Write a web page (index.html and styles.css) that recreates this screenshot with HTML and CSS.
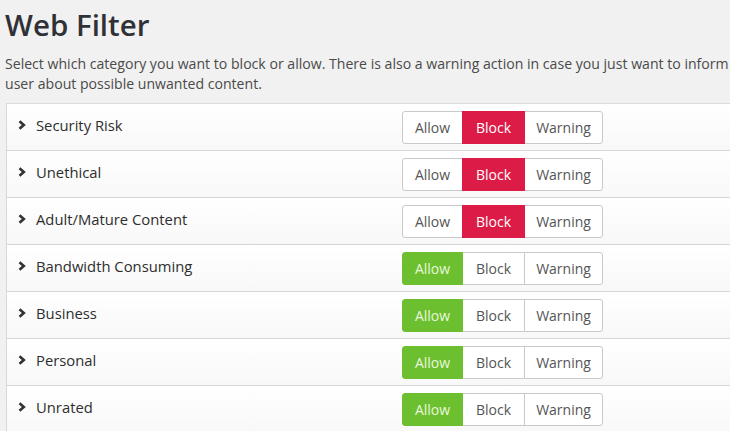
FILE: index.html
```html
<!DOCTYPE html>
<html lang="en">
<head>
  <meta charset="UTF-8" />
  <title>Web Filter</title>
  <link rel="stylesheet" href="styles.css">
</head>
<body>
  <div class="page">
    <h1>Web Filter</h1>
    <p class="intro">Select which category you want to block or allow. There is also a warning action in case you just want to inform user about possible unwanted content.</p>
    <div class="categorias" id="categorias"></div>
  </div>
  <script>
    const categorias = [
      ['Security Risk', 'block'],
      ['Unethical', 'block'],
      ['Adult/Mature Content', 'block'],
      ['Bandwidth Consuming', 'allow'],
      ['Business', 'allow'],
      ['Personal', 'allow'],
      ['Unrated', 'allow']
    ];

    const chevron = '<svg class="chevron" width="8" height="10" viewBox="0 0 8 10"><path d="M1.5 1.3 L5.8 5 L1.5 8.7" fill="none" stroke="#333" stroke-width="2.6"/></svg>';

    document.getElementById('categorias').innerHTML = categorias.map(([nome, acao]) => `
      <div class="linha">
        <div class="nome">${chevron}<span>${nome}</span></div>
        <div class="acoes">
          <button class="btn allow ${acao === 'allow' ? 'ativo' : ''}">Allow</button>
          <button class="btn block ${acao === 'block' ? 'ativo' : ''}">Block</button>
          <button class="btn warning">Warning</button>
        </div>
      </div>
    `).join('');
  </script>
</body>
</html>
```

FILE: styles.css
```css
:root {
  --vermelho: #dc1c47;
  --verde: #6cbf2f;
  --borda: #c9c9c9;
  --texto: #2e2e2e;
}
html, body {
  overflow: hidden;
}
body {
  margin: 0;
  background: #f1f1f1;
  font-family: 'Open Sans', sans-serif;
  color: var(--texto);
}
.page {
  width: 748px;
  padding: 0 0 0 6px;
}
h1 {
  margin: 0 0 0 -1px;
  padding: 3px 0 0 0;
  font-size: 29.5px;
  font-weight: 600;
  line-height: 44px;
  color: #2f3136;
}
.intro {
  width: 728px;
  margin: 7px 0 9px -1px;
  font-size: 14.1px;
  line-height: 20px;
  color: #4a4a4a;
}
.categorias {
  border-left: 1px solid #d8d8d8;
  border-top: 1px solid #dcdcdc;
}
.linha {
  display: flex;
  align-items: center;
  height: 46px;
  border-bottom: 1px solid #d6d6d6;
  background: linear-gradient(#fff, #f8f8f8);
}
.nome {
  width: 384px;
  display: flex;
  align-items: center;
  padding-left: 11px;
  font-size: 14.8px;
  margin-top: -5px;
}
.chevron {
  margin-right: 10px;
}
.acoes {
  display: flex;
}
.btn {
  height: 33px;
  padding: 0;
  border: 1px solid var(--borda);
  background: #fff;
  font-family: 'Open Sans', sans-serif;
  font-size: 14px;
  color: #555;
}
.btn + .btn {
  margin-left: -1px;
}
.allow {
  width: 61px;
  border-radius: 3px 0 0 3px;
}
.block {
  width: 63px;
}
.warning {
  width: 79px;
  border-radius: 0 3px 3px 0;
}
.block.ativo {
  background: var(--vermelho);
  border-color: var(--vermelho);
  color: #fff;
  position: relative;
}
.allow.ativo {
  background: var(--verde);
  border-color: var(--verde);
  color: #e9f7dd;
  position: relative;
}
```
